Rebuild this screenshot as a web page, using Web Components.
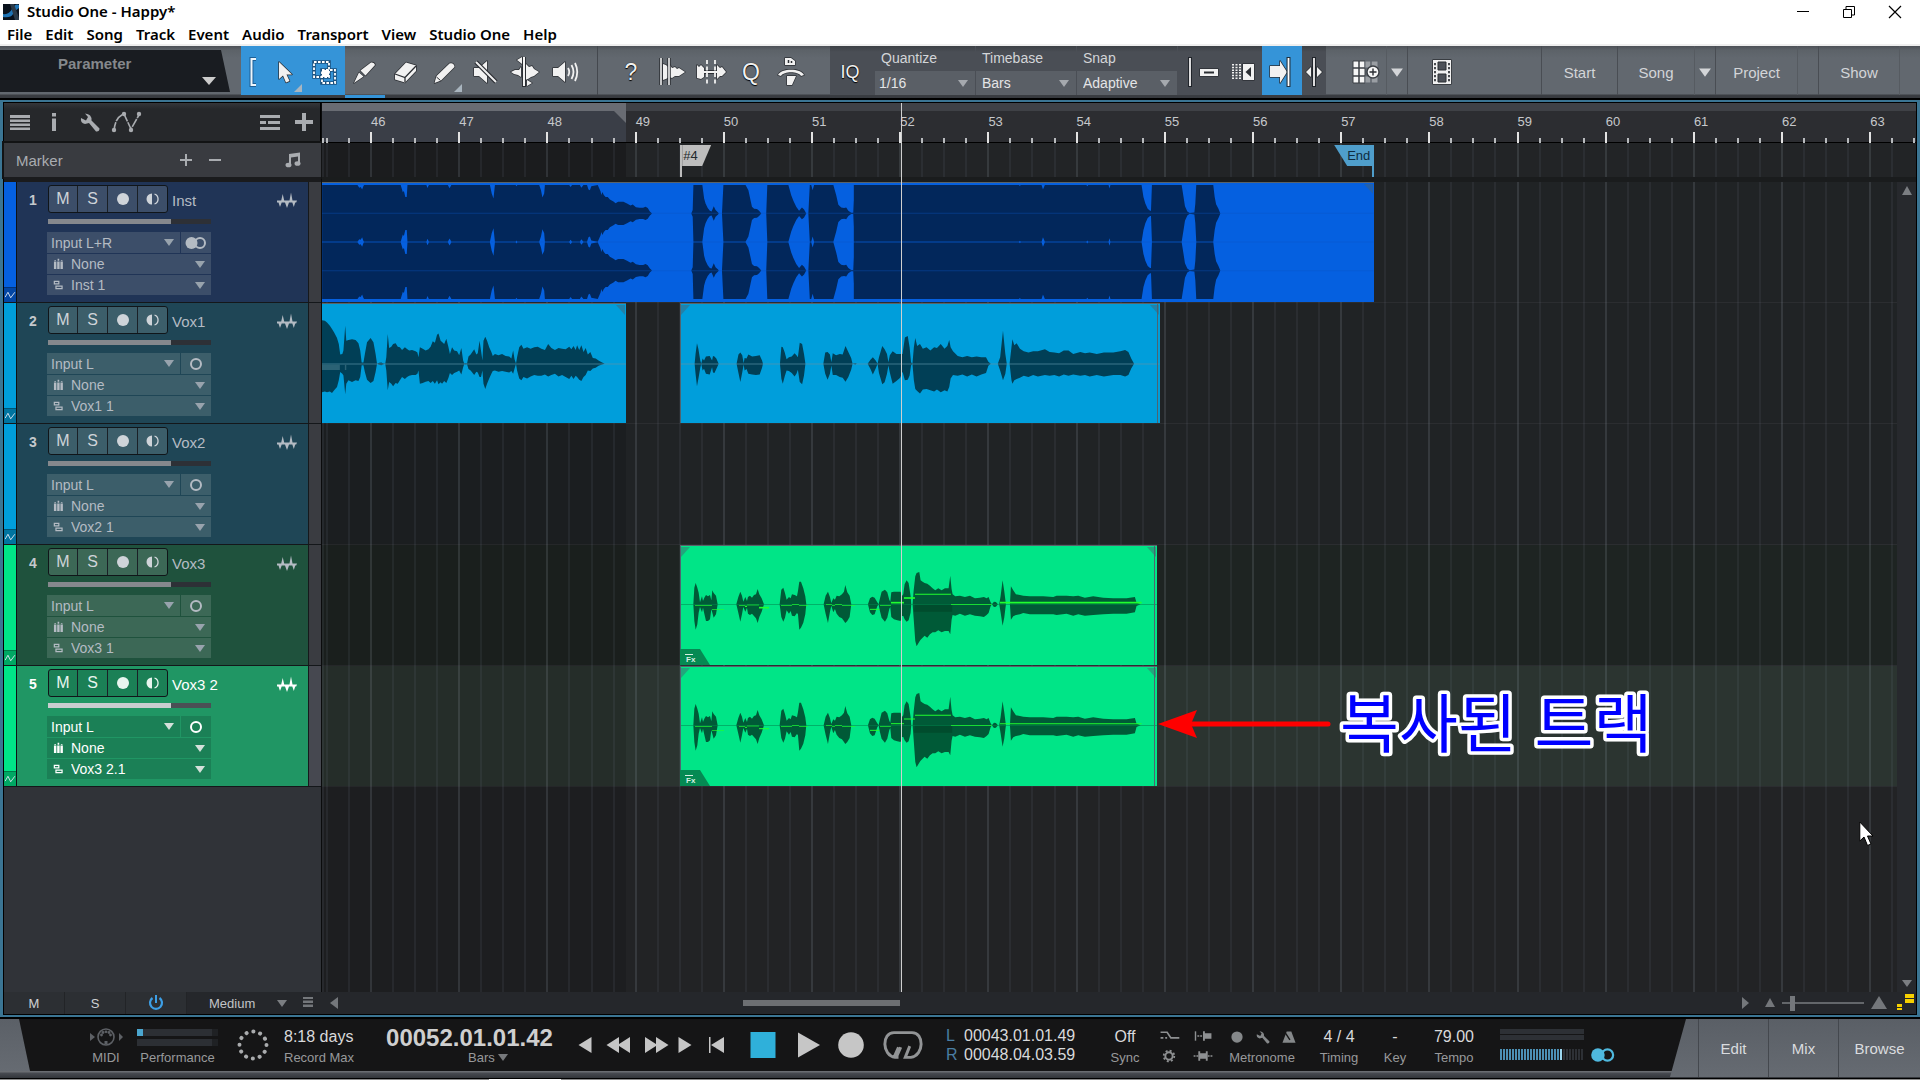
<!DOCTYPE html>
<html lang="ko">
<head>
<meta charset="utf-8">
<title>Studio One - Happy*</title>
<style>
html,body{margin:0;height:100%;background:#000}
body{font-family:"Liberation Sans","Noto Sans CJK KR",sans-serif;font-size:14px;color:#d3d5d8;overflow:hidden}
</style>
</head>
<body>
<studio-app></studio-app>
<script>
const BASE = `<style>
:host{display:block;box-sizing:border-box}
*,*::before,*::after{box-sizing:border-box}
button,select,input{font:inherit;color:inherit;margin:0;padding:0;border:0;background:none;border-radius:0;outline:0}
select{appearance:none;cursor:pointer}
option{color:#000}
svg{display:block;flex:none}
</style>`;
const make = (name, render) => customElements.define(name, class extends HTMLElement {
  connectedCallback() {
    if (this.shadowRoot) return;
    const root = this.attachShadow({mode: 'open'});
    const t = document.createElement('template');
    t.innerHTML = BASE + render(this);
    root.append(t.content.cloneNode(true));
  }
});

/* ---------- icons ---------- */
const O = 'fill="#f1f1f1" stroke="#2b2e33" stroke-width="1.4" paint-order="stroke" stroke-linejoin="round"';
const ICONS = {
  bracket: `<path d="M19 3H14.500V29H19" fill="none" stroke="#1d5f95" stroke-width="4"/><path d="M19 3H14.500V29H19" fill="none" stroke="#eef6fc" stroke-width="2"/>`,
  arrow: `<path ${O} d="M10 6V23L14 19.500 17 26.500 20.500 25 17.500 18.500H23Z"/>`,
  marquee: `<g fill="none" stroke="#1b4f7c" stroke-width="3.500"><path d="M5 6H20V21H5ZM13 14H26V27H13Z"/></g><g fill="none" stroke="#fff" stroke-width="1.800" stroke-dasharray="2.600 1.400"><path d="M5 6H20V21H5Z"/><path d="M13 14H26V27H13Z"/></g><path d="M13 14H20V21H13Z" fill="#fff"/>`,
  knife: `<path ${O} d="M5 27 10 16.500 14.500 20.500ZM11.500 14.500 22 6.500Q25.500 6 26 9L16.500 19.500Z"/>`,
  eraser: `<path ${O} d="M6 18 17 6.500 27 9.500V15L16 26.500 6 23.500Z"/><path d="M6 18 16 21.500 27 10M16 21.500V26" fill="none" stroke="#2b2e33" stroke-width="1.300"/>`,
  pencil: `<path ${O} d="M5.500 27 7.500 20 20.500 7.500Q25 6.500 25.500 11L12 24.500Z"/><path d="M7.500 21 11.500 24.500" stroke="#2b2e33"/>`,
  mute: `<path ${O} d="M5 12H10L18 5V27L10 20H5Z"/><path d="M7 6 27 26" stroke="#2b2e33" stroke-width="4.500"/><path d="M7 6 27 26" stroke="#f1f1f1" stroke-width="2"/>`,
  bend: `<path ${O} d="M2 16 6 14 10 14 12 11V21L9 19 5 18ZM17 8 20 11 23 10 25 13 30 16 25 20 22 21 19 23 17 24Z"/><path d="M15 1V31" stroke="#2b2e33" stroke-width="4"/><path d="M15 1V30" stroke="#f1f1f1" stroke-width="2"/><path ${O} d="M8 4 13 1V8ZM18 24V30L23 27Z"/>`,
  listen: `<path ${O} d="M4 12H9L16 6V26L9 20H4Z"/><path d="M19 12Q21.500 16 19 20M22.500 9Q26.500 16 22.500 23M26 7Q30.500 16 26 25" fill="none" stroke="#f1f1f1" stroke-width="1.800"/>`,
  strip: `<path ${O} d="M8 8 11 9 13 11 15 9 17 12 20 11 22 13 24 12 30 16 24 20 20 20 17 22 14 21 11 23 8 24Z"/><path d="M6 2V29M14 2V29" stroke="#2b2e33" stroke-width="3.500"/><path d="M6 2V29M14 2V29" stroke="#f1f1f1" stroke-width="1.600"/>`,
  split: `<path ${O} d="M2 9 4 11 6 9 9 12V21L6 23 2 22ZM22 9 25 12 27 11 31 16 27 20 25 20 22 23Z"/><path d="M9 16H22" stroke="#2b2e33" stroke-width="4"/><path d="M9 16H22" stroke="#f1f1f1" stroke-width="2"/><path d="M12 4V28M20 4V28" stroke="#f1f1f1" stroke-width="1.800" stroke-dasharray="4 2.500"/>`,
  macro: `<path ${O} d="M10 9V2H16L20 5V9ZM3 19C6 12 26 12 29 19L26 20C23 15 9 15 6 20ZM12 20H21L17 29H12Z"/><path d="M13.500 7V4M16.500 7V5" stroke="#2b2e33" stroke-width="1.500"/>`,
  ahead: `<path ${O} d="M4 10H14V5L21 16 14 27V21H4Z"/><path d="M22.500 1V31" stroke="#20303e" stroke-width="4"/><path d="M22.500 2V30" stroke="#fff" stroke-width="1.800"/>`,
  clip: `<path d="M7 13H25V20H7Z" ${O}/><path d="M11 15.500H21V17.500H11Z" fill="#2b2e33"/>`,
  keys: `<path d="M6 8V24M9.500 8V24M13 8V24" stroke="#f1f1f1" stroke-width="2" stroke-dasharray="1.500 1.200"/><path d="M16 8H27V24H16Z" ${O}/><path d="M24 11V21L18.500 16Z" fill="#2b2e33"/>`,
  halves: `<path d="M16 1V31" stroke="#20242a" stroke-width="4"/><path d="M16 2V30" stroke="#f1f1f1" stroke-width="1.800"/><path ${O} d="M13 11V21L8 16ZM19 11V21L24 16Z"/>`,
  vline: `<path d="M16 1V31" stroke="#20242a" stroke-width="4"/><path d="M16 2V30" stroke="#f1f1f1" stroke-width="1.800"/>`,
  grid: `<g fill="#f6f6f6" stroke="#3b3f45"><path d="M3 5H9V12H3ZM9 5H15V12H9ZM3 12H9V20H3ZM9 12H15V20H9ZM3 20H9V27H3ZM9 20H15V27H9Z"/></g><g fill="#9a9ea3" stroke="#5f656c"><path d="M15 5H21V12H15ZM21 5H28V12H21ZM15 20H21V27H15ZM21 20H28V27H21Z"/></g><circle cx="23" cy="16" r="6" fill="#f6f6f6" stroke="#3b3f45" stroke-width="1.400"/><path d="M23 12.500V19.500M19.500 16H26.500" stroke="#2b2e33" stroke-width="1.400"/>`,
  film: `<path d="M6 4H24V28H6Z" ${O}/><path d="M8 7V27M22 7V27" stroke="#2b2e33" stroke-width="1.700" stroke-dasharray="2.200 1.800"/><path d="M11 6H19V14H11ZM11 18H19V26H11Z" fill="#4d5158" stroke="#2b2e33"/>`,
  rows: `<path d="M6 9H26V12H6ZM6 13.500H26V16H6ZM6 17.500H26V20H6ZM6 21.500H26V24H6Z"/>`,
  info: `<path d="M14 7H18V10.500H14ZM14 12.500H18V25H14Z"/>`,
  wrench: `<path d="M7 12Q6 17 11 18L15 17 22 25.500Q25.500 26 25.500 22.500L17.500 14.500Q18 8 11 7.500L14 11 12 14.500Z"/>`,
  curve: `<path d="M3 25Q4 11 13 8L20 23 28 9" fill="none" stroke="currentColor" stroke-width="1.600" stroke-dasharray="9 1"/><g><circle cx="3" cy="24" r="2.200"/><circle cx="13" cy="8" r="2.200"/><circle cx="20" cy="24" r="2.200"/><circle cx="28" cy="8" r="2.200"/></g>`,
  lanes: `<path d="M6 9H26V12H6ZM6 15H12V18H6ZM14 15H26V18H14ZM6 21H26V24H6Z"/>`,
  plus: `<path d="M14 7H18V14H25V18H18V25H14V18H7V14H14Z"/>`,
  add: `<path d="M15 10H17V15H22V17H17V22H15V17H10V15H15Z"/>`,
  sub: `<path d="M10 15H22V17H10Z"/>`,
  note: `<path d="M12 10 23 8.500V19H21V12.500L14 13.500V21H12Z"/><ellipse cx="11.500" cy="21" rx="3" ry="2.300"/><ellipse cx="20.500" cy="19.500" rx="3" ry="2.300"/>`,
  wave: `<path d="M6 15.500H10.200L11.700 9 13.200 15.500H18.500L20 7.500 21.500 15.500H26L25.200 17.500H24.200L22.800 22 21.300 17.500H18L16 23 14 17.500H10.700L9 22 7.500 17.500H6Z"/>`,
  rec: `<circle cx="16" cy="16" r="6"/>`,
  mon: `<path d="M15 10.500V21.500A5.500 5.500 0 0 1 15 10.500Z"/><path d="M17.500 11A5.300 5.300 0 0 1 17.500 21" fill="none" stroke="currentColor" stroke-width="1.300"/>`,
  mini: `<path d="M9 19 13 12 17 20 23 12" fill="none" stroke="currentColor" stroke-width="1.300"/>`,
  bank: `<path d="M11 13H14V22H11ZM15 13H18V22H15ZM19 13H22V22H19Z"/><path d="M11.500 11H13.500V12H11.500ZM15.500 9.500H17.500V12H15.500ZM19.500 11H21.500V12H19.500Z"/>`,
  route: `<path d="M11.500 11.500H17V14.500H11.500ZM13.500 17.500H21V20.500H13.500Z" fill="none" stroke="currentColor" stroke-width="1.500"/>`,
  mono: `<circle cx="16" cy="16" r="5" fill="none" stroke="currentColor" stroke-width="2"/>`,
  stereo: `<circle cx="11.500" cy="16" r="6"/><circle cx="20" cy="16" r="5" fill="none" stroke="currentColor" stroke-width="2"/>`,
  power: `<path d="M12.500 11A6 6 0 1 0 19.500 11" fill="none" stroke="currentColor" stroke-width="2.200"/><path d="M15 8H17V16H15Z"/>`,
  down: `<path d="M11 13H21L16 20Z"/>`,
  up: `<path d="M11 20H21L16 11Z"/>`,
  upbig: `<path d="M8 22H24L16 9Z"/>`,
  left: `<path d="M20 10V22L12 16Z"/>`,
  right: `<path d="M13 10V22L20 16Z"/>`,
  list: `<path d="M11 10H21V12H11ZM11 13.500H21V16H11ZM11 17.500H21V20H11Z"/>`,
  midi: `<circle cx="16" cy="16" r="8" fill="none" stroke="currentColor" stroke-width="1.600"/><g><circle cx="11.500" cy="14" r="1.400"/><circle cx="13" cy="11.500" r="1.400"/><circle cx="16" cy="10.800" r="1.400"/><circle cx="19" cy="11.500" r="1.400"/><circle cx="20.500" cy="14" r="1.400"/><path d="M14.500 20H17.500V23H14.500ZM0 12 5 16 0 20ZM29 12 33 16 29 20Z"/></g>`,
  prev: `<path d="M22.500 8V24L9.500 16Z"/>`,
  rew: `<path d="M17 8V24L4.500 16ZM28 8V24L15.500 16Z"/>`,
  ffw: `<path d="M15 8V24L27.500 16ZM4 8V24L16.500 16Z"/>`,
  next: `<path d="M9.500 8V24L22.500 16Z"/>`,
  start: `<path d="M8 8H9.500V24H8ZM23 8V24L10 16Z"/>`,
  stop: `<path d="M3.500 3H28.500V29H3.500Z"/>`,
  play: `<path d="M5 3.500V28.500L27 16Z"/>`,
  record: `<circle cx="16" cy="16" r="12.800"/>`,
  loop: `<path d="M8 27 12 18M12 27H9C-3 25-3 5 8 5H24C35 5 35 25 23 27H18L22 17M14 18 10 27" fill="none" stroke="currentColor" stroke-width="2.600"/>`,
  gear: `<circle cx="16" cy="16" r="4.500" fill="none" stroke="currentColor" stroke-width="2.400"/><circle cx="16" cy="16" r="6.500" fill="none" stroke="currentColor" stroke-width="2.200" stroke-dasharray="2.500 2.600"/>`,
  ramp: `<path d="M7 12H14L18 18H27M7 18H10M12 18H14" fill="none" stroke="currentColor" stroke-width="1.800"/>`,
  punchin: `<path d="M8 11V21" stroke="currentColor" stroke-width="1.500"/><path d="M10 16H15" stroke="currentColor" stroke-width="1.500" stroke-dasharray="2 1"/><path d="M16 11H18V13H25V19H18V21H16Z"/>`,
  punchout: `<path d="M6 16H11M21 16H27" stroke="currentColor" stroke-width="1.500" stroke-dasharray="2 1"/><path d="M11 11H13V13H19V11H21V21H19V19H13V21H11Z"/>`,
  metro: `<path d="M13.500 10H18.500L23 22H9Z"/><path d="M17 19 11 10" stroke="#151516" stroke-width="1.500"/>`,
  winmin: `<path d="M10 15.500H22" stroke="#000" stroke-width="1"/>`,
  winmax: `<path d="M10.500 13.500H18.500V21.500H10.500ZM13 13V10.500H21.500V19H19" fill="none" stroke="#000"/>`,
  wincls: `<path d="M10 10 22 22M22 10 10 22" stroke="#000" stroke-width="1.200"/>`,
  app: `<path d="M8 8H24V24H8Z" fill="#0a121c"/><path d="M8 18Q14 19 17 13T24 9V12Q20 14 18 18T8 21Z" fill="#1f74b5"/><path d="M15 8H19L24 22V24H20Z" fill="#2b3a48"/>`,
};
make('ui-icon', el => {
  const s = +(el.getAttribute('size') || 32);
  return `<style>:host{display:block;flex:none;width:${s}px;height:${s}px}svg{overflow:visible}</style>
  <svg width="${s}" height="${s}" viewBox="0 0 32 32" fill="currentColor" aria-hidden="true">${ICONS[el.getAttribute('name')]}</svg>`;
});
const ic = (n, s) => `<ui-icon name="${n}"${s ? ` size="${s}"` : ''}></ui-icon>`;

/* drop-down with its own caret */
make('drop-down', el => `<style>
:host{display:flex;position:relative;align-items:center;min-width:0}
select{flex:1;min-width:0;height:100%;padding-left:var(--pad,6px)}
i{width:0;height:0;border:5px solid transparent;border-top:7px solid var(--caret,#a5a9ae);border-bottom:0;margin-right:var(--cm,6px);margin-left:var(--cl,4px);pointer-events:none}
::slotted(*){pointer-events:none;margin:0 -2px}
</style><slot></slot><select aria-label="${el.getAttribute('label')}"><option>${el.getAttribute('value')}</option></select><i></i>`);

/* ---------- window title and menus ---------- */
make('title-bar', () => `<style>
:host{display:flex;align-items:center;height:23px;background:#fff;color:#000;font:600 15px/20px "Noto Sans",sans-serif;padding:0 2px 0 3px}
span{flex:1;margin-left:8px;padding-bottom:1px}.w{display:flex}.w button{width:46px;height:23px;display:grid;place-content:center}
.app{width:16px;height:23px;display:grid;place-content:center}
</style><div class="app">${ic('app')}</div><span>Studio One - Happy*</span>
<div class="w"><button aria-label="Minimize">${ic('winmin')}</button><button aria-label="Restore">${ic('winmax')}</button><button aria-label="Close">${ic('wincls')}</button></div>`);
make('menu-bar', () => `<style>
:host{display:flex;height:23px;background:#fff;color:#000;font:600 15px/22px "Noto Sans",sans-serif;border-bottom:2px solid #efefef;padding-left:7px;gap:13px}
button{height:21px;line-height:22px}
</style>${['File','Edit','Song','Track','Event','Audio','Transport','View','Studio One','Help'].map(x => `<button>${x}</button>`).join('')}`);

/* ---------- main toolbar ---------- */
make('tool-bar', () => `<style>
:host{display:flex;height:54px;border-bottom:2px solid #000;background:linear-gradient(#4d5157 0,#5c6268 4px,#62686f 12px,#62686f 48px,#3a3d42 49px,#36393e);padding-bottom:3px}
button{height:49px;display:grid;place-content:center;flex:none;width:40px;position:relative;padding-top:3px}
.param{width:241px;flex:none;padding-top:4px}
.param div{width:230px;height:42px;background:#191c21;clip-path:polygon(0 0,221px 0,100% 100%,0 100%);display:flex;justify-content:space-between;padding:5px 14px 0 58px;color:#85888c;font:bold 15px/18px "Liberation Sans",sans-serif}
.param i{border:7px solid transparent;border-top:8px solid #ccc;border-bottom:0;margin-top:22px;height:0}
.on{background:#3594d8}.b{width:24px}
.under{box-shadow:0 3px #3594d8}
.more::after{content:"";position:absolute;right:3px;bottom:3px;border-left:8px solid transparent;border-bottom:8px solid #a9b5bf}
.grp{display:flex;flex:none}
.g1{border-right:1px solid #44484e;padding-right:12px}
.g2{padding:0 19px 0 13px;color:#f1f1f1;font-size:23px}
.g2 b,.iq{font-weight:400;text-shadow:0 0 1px #000,0 1px 1px #000}
.dark{background:linear-gradient(#3c4045,#4a4e55 6px)}
.iq{width:40px;margin-right:5px;font-size:18px;color:#f1f1f1}
.fld{width:101px;display:flex;flex-direction:column;border-right:1px solid #4a4e55}
.fld label{height:25px;line-height:22px;padding-left:6px;padding-top:1px}
.fld drop-down{flex:1;background:#5a5f66;color:#e4e5e7;--pad:6px;--cm:7px}
.v{width:24px}.k{width:14px;margin-right:7px}.c{width:39px}.n{width:24px}
.sp{flex:1}
.go{font-size:15px;border-left:1px solid #494d53;color:#d3d5d8}
.car{width:21px;border-left:1px solid #565b61;color:#d3d5d8}
</style>
<div class="param"><div><span>Parameter</span><i></i></div></div>
<div class="grp g1">
<button class="on b" aria-label="Tool link">${ic('bracket')}</button><button class="on more" aria-label="Arrow">${ic('arrow')}</button><button class="on" aria-label="Range">${ic('marquee')}</button>
<button class="under" aria-label="Split">${ic('knife')}</button><button aria-label="Eraser">${ic('eraser')}</button><button class="more" aria-label="Paint">${ic('pencil')}</button><button aria-label="Mute">${ic('mute')}</button><button aria-label="Bend">${ic('bend')}</button><button aria-label="Listen">${ic('listen')}</button></div>
<div class="grp g2"><button aria-label="Help"><b>?</b></button><button aria-label="Strip silence">${ic('strip')}</button><button aria-label="Audio bend">${ic('split')}</button><button aria-label="Quantize panel"><b>Q</b></button><button aria-label="Macros">${ic('macro')}</button></div>
<div class="grp dark"><button class="iq">IQ</button>
<div class="fld"><label>Quantize</label><drop-down label="Quantize" value="1/16" style="--pad:4px"></drop-down></div>
<div class="fld"><label>Timebase</label><drop-down label="Timebase" value="Bars"></drop-down></div>
<div class="fld"><label>Snap</label><drop-down label="Snap" value="Adaptive"></drop-down></div>
<button class="v" aria-label="Snap line">${ic('vline')}</button><button class="k" aria-label="Events">${ic('clip')}</button><button class="c" aria-label="Keys">${ic('keys')}</button>
<button class="on" aria-label="Autoscroll">${ic('ahead')}</button><button class="n" aria-label="Cursor">${ic('halves')}</button></div>
<div class="grp"><button style="width:60px;padding-left:20px" aria-label="Grid">${ic('grid')}</button><button class="car" aria-label="Grid options">${ic('down',38)}</button><button class="go" style="width:70px" aria-label="Video">${ic('film')}</button></div>
<div class="sp"></div>
<div class="grp"><button class="go" style="width:76px">Start</button><button class="go" style="width:77px">Song</button><button class="car" aria-label="Song list">${ic('down',38)}</button><button class="go" style="width:82px">Project</button><div class="car"></div><button class="go" style="width:81px">Show</button><div class="car"></div></div>`);

/* ---------- track header ---------- */
make('track-head', el => {
  const a = n => el.getAttribute(n);
  const st = a('input') === 'Input L+R';
  return `<style>
:host{display:grid;grid-template-columns:12px 1fr 12px;height:var(--track-h);border-bottom:1px solid #14171a;color:#b4bbc3;--caret:#98a3ad}
:host([selected]){color:#fff;--caret:#d4e0da}
.col{background:var(--c);display:flex;align-items:flex-end}
.col span{height:15px;width:12px;overflow:hidden;background:#0004;color:#dfe8f5;border-top:1px solid #0004;display:grid;place-content:center;flex:none}
.body{background:var(--b);border-left:1px solid #0d1216;display:grid;grid-template-columns:30px 164px 1fr;align-content:start;border-right:1px solid #16191c}
.num{font:bold 14px/16px "Liberation Sans",sans-serif;padding:10px 0 0 12px;color:#c4c8cc}
:host([selected]) .num{color:#fff}
.btns{display:grid;grid-template-columns:28px 30px 30px 30px;margin:3px 0 0 1px;height:28px;width:120px;border:1px solid #101519;border-radius:3px;background:var(--k)}
.btns button{display:grid;place-content:center;font-size:16px;color:#cfd4d9;border-left:1px solid #1a2026;height:26px}
.btns button:first-child{border:0}
:host([selected]) .btns button{color:#e8f5ef}
.top{grid-column:3;grid-row:1;display:flex;justify-content:space-between;align-items:center;padding:6px 5px 0 0;margin-left:-39px;height:31px}
.name{font-size:15px;line-height:18px}
.vol{height:5px;width:163px;margin:6px 0 8px 1px;grid-column:2;appearance:none;background:linear-gradient(90deg,#85888d 123px,#2d3036 0)}
:host([selected]) .vol{background:linear-gradient(90deg,#c9cdd0 123px,#4b4f55 0)}
.vol::-webkit-slider-thumb{appearance:none;width:0;height:0}
.io{grid-column:2;display:grid;grid-template-columns:133px 30px;gap:1px;font-size:14px}
.io>*{height:20px;background:var(--k)}
.io .in,.io button{height:21px}
.io .w{grid-column:span 2;--pad:2px}
.io .in{--pad:4px}
.io button{display:grid;place-content:center}
.strip{background:#3a3c41}
:host([selected]) .strip{background:#464850}
</style>
<div class="col"><span>${ic('mini',22)}</span></div>
<div class="body"><div class="num">${a('num')}</div>
<div class="btns"><button>M</button><button>S</button><button aria-label="Record">${ic('rec')}</button><button aria-label="Monitor">${ic('mon')}</button></div>
<div class="top"><span class="name">${a('name')}</span>${ic('wave')}</div>
<input class="vol" type="range" aria-label="Volume" value="75">
<div class="io"><drop-down class="in" label="Input" value="${a('input')}"></drop-down><button aria-label="Channel format">${ic(st ? 'stereo' : 'mono')}</button>
<drop-down class="w" label="Instrument" value="None">${ic('bank',26)}</drop-down>
<drop-down class="w" label="Output" value="${a('out')}">${ic('route',26)}</drop-down></div></div>
<div class="strip"></div>`;
});

/* ---------- time grid: one cell per beat ---------- */
const cells = beats => {
  let out = '<i style="flex:0.18"></i>', left = beats - 0.18, n = 2;
  while (left > 0) {
    const bar = n % 4 === 0;
    out += `<i class="${bar ? 'bar' : 'beat'}" style="flex:${Math.min(1, left).toFixed(2)}">${bar ? `<span>${45 + n / 4}</span>` : ''}</i>`;
    left -= 1; n++;
  }
  return out;
};
make('time-ruler', () => `<style>
:host{display:flex;height:40px;background:linear-gradient(#3f4146 8px,#2c2d31 8px);border-bottom:1px solid #000;position:relative}
i{font-style:normal;position:relative;height:39px;min-width:0;white-space:nowrap}
i::before{content:"";position:absolute;left:0;bottom:-1px;width:2px;height:5px;background:#b9bbbe}
i:first-child::before{display:none}
.bar::before{height:11px;background:#e2e2e2}
span{font-size:13px;line-height:16px;display:block;padding:11px 0 0 1px;color:#c6c8cb}
.loop{position:absolute;left:0;top:0;bottom:0;width:19.07%;background:linear-gradient(#696c73 8px,#3a3e47 8px)}
.loop::after{content:"";position:absolute;right:0;top:8px;border-top:12px solid #696c73;border-left:12px solid transparent}
</style><div class="loop"></div>${cells(72.28)}`);
make('time-grid', () => `<style>
:host{display:flex;position:absolute;inset:0;pointer-events:none;z-index:1}
:host([wide]){right:19px}
i{min-width:0;box-shadow:inset 2px 0 #8e99a518;height:100%}
i:first-child{box-shadow:none}.bar{box-shadow:inset 2px 0 #8e99a530}span{display:none}
</style>${cells(71.44)}`);

/* ---------- clips ---------- */
/* "x:up,down" samples round a centre line, as one closed outline */
const outline = (data, c) => {
  const p = data.trim().split(/\s+/).map(s => { const [x, v] = s.split(':'); const [u, d] = v.split(','); return [+x, +u, +(d ?? u)]; });
  return 'M' + p.map(q => `${q[0]} ${c - q[1]}`).join('L') + 'L' + p.reverse().map(q => `${q[0]} ${c + q[2]}`).join('L') + 'Z';
};
const instA = `6:86 105:86 110:78 114:80 118:72 122:84 124:86 226:86 232:64 235:68 239:50 243:50 245:86 298:86 301:77 305:86 358:86 363:76 368:86 476:86 481:60 486:45 490:86 548:86 550:82 553:86 614:86 619:70 623:48 628:60 630:86 698:86 702:80 706:86 728:86 732:78 738:86 748:86 752:72 756:70 760:82 778:86 782:76 786:66 788:56 791:65 795:56 800:50 806:50 812:42 822:36 828:31 835:35 850:35 860:30 870:24 876:27 885:19 895:17 905:17 912:20 918:16 924:6 930:0 1040:0 1044:10 1046:86 1071:86 1076:45 1080:30 1086:16 1092:8 1097:6 1103:22 1108:10 1115:3 1117:0 1126:0 1130:86 1192:86 1200:70 1206:40 1210:20 1216:14 1224:13 1230:8 1236:0 1250:0 1253:86 1312:86 1320:55 1326:38 1334:20 1342:8 1350:18 1356:12 1362:0 1368:0 1372:86 1376:86 1380:70 1384:86 1438:86 1446:55 1452:26 1460:18 1468:16 1474:18 1480:8 1488:2 1494:2 1498:86 1500:86`;
const instB = `390:86 740:86 742:83 744:86 788:86 791:72 795:86 883:86 885:82 887:86 930:86 932:75 934:86 1000:86 1004:50 1008:30 1013:14 1018:8 1020:8 1022:86 1085:86 1089:50 1092:22 1097:6 1102:1 1112:3 1114:30 1116:86 1152:86 1155:50 1158:28 1163:14 1167:0`;
const voxA = `6:132,86 14:130,84 20:125,86 28:115,84 34:105,88 40:95,80 48:78,70 53:60,50 57:28,25 63:30,30 66:40,35 71:115,92 74:70,60 80:72,50 90:74,55 100:72,50 108:62,52 113:40,40 117:4 122:4 126:30,25 132:65,48 142:78,58 150:65,52 156:30,25 160:0 166:3 172:4 178:1 183:0 186:20 190:90,80 194:48,55 200:52,60 205:60,68 212:62,58 218:52,60 224:50 230:42,40 238:50,46 244:45,40 250:40,36 258:42,34 268:38,34 273:34,30 276:20 280:50,60 288:46,58 296:40,54 304:44,52 310:52,58 316:68,52 322:64,60 328:88,50 332:92,62 338:70,56 342:66,60 348:60,52 354:76,58 360:50,42 364:30,28 370:50,34 376:40,28 384:38,24 390:26,20 396:48,32 401:10 404:1 408:2 412:1 416:22,16 422:28,20 432:44,34 438:28,24 442:32,26 447:70,40 451:40 455:10,20 458:70,60 463:82,76 468:70,60 474:50,44 480:36,30 484:24,22 490:30,20 500:26,24 510:30,22 520:24 530:22,26 536:16,22 541:40,30 545:14 549:0 552:20 558:50,44 564:58,50 570:46,40 580:50,44 590:46,38 600:50,34 610:52,36 620:46,36 630:42,32 639:60,38 648:48,34 658:42,30 668:48,38 678:46,34 688:44,40 698:52,46 704:44,36 710:54,46 716:42,36 720:56,40 726:42,48 732:56,52 738:36,40 744:48,34 750:28,20 757:36,22 764:18,14 772:16,12 780:10,6 790:4,2 797:0`;
const voxB = `52:0 54:30 57:62,68 60:45 64:10,12 66:0 69:16,20 72:10,15 76:22,30 84:24,32 89:10 91:24,26 94:22,28 98:16 103:0 141:0 145:28 149:34,55 153:26 156:2 158:18,20 162:16 166:28,30 174:22,32 182:24,34 190:26,32 195:10,12 197:0 233:0 236:52,45 239:50,60 243:35,38 247:14,20 252:20,22 258:22,28 264:32,38 268:26,30 271:20,18 275:64,55 280:60,62 284:30,35 287:0 325:0 329:34,30 334:36,48 339:28,30 342:5 345:32,34 352:26,34 360:30,40 366:28,42 372:54 378:36,40 384:18 387:0 393:2 396:0 419:0 425:12,16 430:20,32 436:10,14 440:0 443:20,28 450:54,62 455:44,56 460:30 463:5 466:26 472:38,60 480:30,52 488:30,42 493:30,24 498:80,50 504:84,48 508:50,35 511:5 514:0 517:50 520:78,76 524:54,82 530:60,90 536:46,78 544:50,76 552:40,80 560:50,84 566:48,78 574:60,86 582:46,80 588:54,84 592:72,70 595:50,44 600:38,34 610:24,36 620:20,32 630:24,38 640:20,32 650:22,38 660:20,32 670:20,28 675:6 680:0 695:0 700:20 706:100,50 711:30 714:0 720:0 724:50 726:74,60 730:56,50 735:62,46 742:46,42 750:38,36 760:34,40 770:38,34 780:38 795:44,34 805:36 815:34 825:32,38 835:40,32 845:40,36 855:30,32 870:36 880:32,34 890:34,38 905:30,34 920:34,38 940:34 955:38,34 965:42,38 972:36,34 978:16,14 984:0`;
const voxC = `70:0 73:50 77:64,76 82:50,60 86:35,25 90:6,8 96:24 99:10 103:20,28 108:28,50 114:24,50 120:28,45 124:12,15 127:42,25 131:34,40 138:26,30 143:0 199:0 205:22,25 211:38,52 216:26,30 220:8 226:22 231:10 234:22,28 240:26,32 246:20,28 252:28,35 258:30,42 263:46,56 268:30,38 275:18,22 282:0 329:0 334:44,38 340:50,52 345:34,40 350:14,18 357:22,28 362:18,20 366:30,34 374:28,36 381:24,26 384:40,30 388:68,76 393:68,70 400:48,55 406:24,30 409:0 461:0 467:26,28 474:38,56 480:22 484:4 490:18,24 495:14 500:26,28 508:24,38 516:30,42 522:38,50 526:58,56 532:36,50 539:26,38 544:0 594:0 600:18,24 607:23,32 614:20,30 622:6 626:0 629:14,16 635:38,40 645:44,52 652:36,40 658:14 661:8 664:36,38 672:38,45 682:38,48 692:38,50 696:25,35 700:30,35 704:60,45 710:72,52 716:64,48 722:25 724:0 728:0 731:40 736:84,110 740:94,126 748:97,112 752:72,106 758:68,100 764:64,94 772:62,100 780:56,90 788:48,84 796:42,84 805:48,78 815:42,84 825:48,80 836:48,80 841:86,90 845:46 848:30,32 856:24,34 870:26,28 885:22,34 900:26,30 915:18,34 930:20,36 942:22,38 950:18,32 956:22,26 962:6 966:0 972:8 978:7 984:0 988:0 992:24 998:72,64 1003:40 1008:0 1020:0 1023:54,46 1030:42,36 1038:30,32 1050:28,30 1060:26 1080:24,30 1120:24,30 1150:22,30 1160:26,32 1190:26,28 1210:24,34 1225:26,30 1245:20,34 1270:24,32 1300:20,30 1330:18,28 1370:18,28 1395:22,24 1400:5 1412:0`;
/* detected pitches: x1, x2, y, thickness */
const pitches = thin => [[75,126,196,2],[126,162,208,2],[207,225,196,2],[225,231,199,4],[231,267,195,2],[267,297,203,5],[333,366,196,2],[366,387,193,2],[387,414,196,2],[468,486,193,2],[486,495,196,2],[495,516,193,2],[516,556,196,2],[600,628,208,3],[630,663,196,2],[663,702,188,5],[702,735,174,5],[735,843,163,3],[843,966,193,2],[990,1415,188,5]]
  .map(([a, b, y, h]) => { const k = thin ? Math.min(h, 3) : h; return `<path d="M${a} ${y - k / 2}H${b}V${y + k / 2}H${a}Z"/>`; }).join('');
const green = thin => ({c: '#00e587', box: '30 18 1431 357', d: `<path fill="#005a37" d="${outline(voxC, 193)}"/><path fill="#004c2d" d="M735 193H847V215H732Z"/><path d="M30 192H1461V195H30Z" fill="#00864f88"/><g fill="#1fff2f">${pitches(thin)}</g>`});
const WAVES = {
  inst: {c: '#0560e0', box: '322 182 1052 120', d: [113, 286].map(c => `<g fill="#02275b"><path transform="translate(320 175) scale(.35714 .33333)" d="${outline(instA, c)}"/><path transform="translate(670 175) scale(.4719 .33333)" d="${outline(instB, c)}"/></g>`).join('') + `<path d="M322 212H1374V213H322ZM322 241H1374V242H322ZM322 270H1374V271H322Z" fill="#0b55c266"/>`},
  voxa: {c: '#009edb', box: '6 384 851 360', d: `<path fill="#013f56" d="${outline(voxA, 565)}"/><path d="M6 564H857V567H6Z" fill="#5f93a8aa"/><path d="M6 567H56V584H6ZM70 567H74V584H70Z" fill="#2b6275"/>`},
  voxb: {c: '#009edb', box: '21 384 1017 360', d: `<path fill="#013f56" d="${outline(voxB, 565)}"/><path d="M21 564H1038V567H21Z" fill="#5f93a8aa"/>`},
  voxc: green(false), voxd: green(true),
};
make('audio-clip', el => {
  const w = WAVES[el.getAttribute('wave')], fx = el.hasAttribute('fx'), s = +el.getAttribute('start'), e = +el.getAttribute('end');
  const fade = el.getAttribute('fade') || '';
  return `<style>
:host{position:absolute;z-index:2;top:0;bottom:0;left:${((s - 45.452) / 17.861 * 100).toFixed(3)}%;width:${((e - s) / 17.861 * 100).toFixed(3)}%;background:${w.c};border-top:1px solid #58636b}
.wv{position:absolute;inset:0;width:100%;height:100%}
.l,.r{position:absolute;top:1px;border-top:10px solid #46607077;z-index:1}
.l{left:1px;border-right:9px solid transparent}.r{right:1px;border-left:9px solid transparent}
.e{position:absolute;top:0;bottom:0;width:1px;background:#4f6470}
.fx{position:absolute;left:0;bottom:0;width:30px;height:16px;background:#058a53;clip-path:polygon(0 0,20px 0,100% 100%,0 100%);color:#d5efe2;font:bold 8px/8px "Liberation Sans",sans-serif;padding:7px 0 0 6px}
.fx::before{content:"";position:absolute;left:5px;top:5px;width:8px;height:1px;background:#d5efe2}
</style><svg class="wv" viewBox="${w.box}" preserveAspectRatio="none">${w.d}</svg>
${fade.includes('l') ? '<div class="l"></div><div class="e" style="left:0"></div>' : ''}${fade.includes('r') ? '<div class="r"></div>' : ''}${fade.includes('e') ? '<div class="e" style="right:2px"></div>' : ''}
${fx ? '<div class="fx">Fx</div>' : ''}`;
});
make('track-lane', () => `<style>
:host{height:var(--track-h);flex:none;position:relative;background:#202325;border-bottom:1px solid #2b2d30}
:host([tint]){background:#1e2422}:host([selected]){background:#2b3430}
</style><slot></slot>`);

make('marker-lane', () => `<style>
:host{height:34px;background:#222426;position:relative}
.f{position:absolute;z-index:2;top:2px;height:32px;font-size:13px;line-height:22px;color:#22282c}
.f span{display:block;height:21px}
.a{left:22.47%;width:31px;border-left:2px solid #bdbdbd}.a span{background:#bdbdbd;clip-path:polygon(0 0,100% 0,20px 100%,0 100%);padding-left:1px}
.b{left:63.5%;width:40px;border-right:2px solid #4f9ecb;color:#0e2c40}.b span{background:#4f9ecb;clip-path:polygon(0 0,100% 0,100% 100%,13px 100%);padding-left:13px}
.lp{position:absolute;left:0;top:0;bottom:0;width:19.07%;background:#0003}
</style><div class="lp"></div><time-grid wide></time-grid><div class="f a"><span>#4</span></div><div class="f b"><span>End</span></div>`);

/* ---------- arrange view ---------- */
make('arrange-view', () => `<style>
:host{display:grid;grid-template-columns:318px 1fr;grid-template-rows:1fr 22px;flex:1;min-height:0;border:solid #3b7593;border-width:2px 3px;background:#000;padding:1px;--track-h:121px}
.left{display:flex;flex-direction:column;border-right:1px solid #0a0b0c;background:#303338;min-height:0}
.tools{height:38px;display:flex;align-items:center;background:linear-gradient(#34363a,#26282b 6px);color:#a9acb0;border-right:1px solid #000}
.tools button,.mk button{height:32px;display:grid;place-content:center}
.tools .s{flex:1}
.mk{height:34px;margin:2px 0 0;outline:2px solid #121314;background:#393b40;display:flex;align-items:center;color:#a9acb0;font-size:15px;padding-left:12px}
.mk span{flex:1}
.tr{margin-top:5px;display:flex;flex-direction:column;box-shadow:0 -5px #1a1b1d}
.right{display:flex;flex-direction:column;position:relative;min-width:0;min-height:0;background:#1a1b1d}
.gap{height:5px;background:#1a1c1d;flex:none}
.cv{display:flex;flex:1;min-height:0}
.lanes{flex:1;position:relative;background:#222325;display:flex;flex-direction:column;overflow:hidden}
.lp{position:absolute;left:0;top:0;bottom:0;width:19.3%;background:#0002;z-index:1}
.sb{width:19px;background:#27292d;color:#7b7e82;display:flex;flex-direction:column;justify-content:space-between;align-items:center}
.sb button{width:19px;height:18px;display:grid;place-content:center}
.ph{position:absolute;top:0;bottom:0;left:36.33%;width:1px;background:#cfcfcf;z-index:4}
.note{position:absolute;z-index:5;left:52.45%;top:561px;display:flex;align-items:center;height:120px}
.note text{font:400 64px "Noto Sans CJK KR",sans-serif;fill:#00f;stroke:#fff;stroke-width:7px;stroke-linejoin:round;paint-order:stroke}
.cur{position:absolute;z-index:6;top:718px;left:96.4%}
.foot{grid-column:1/-1;background:#25272b;display:flex;align-items:center;color:#d0d2d4;font-size:13px}
.foot .c{width:61px;height:22px;display:grid;place-content:center;background:#2c2f33;border-right:1px solid #222427;flex:none}
.foot .p{color:#3d9fe6}
.foot drop-down{width:92px;margin-left:16px;height:22px;color:#c2c4c7;--caret:#7b7e82;--cm:8px}
.foot .g{color:#74777b;width:26px;display:grid;place-content:center;flex:none}
.bar{flex:1;height:6px}.bar div{width:11.33%;height:6px;margin-left:28.6%;background:#6d6f72}
input{appearance:none;width:82px;height:16px;background:linear-gradient(transparent 7px,#63666a 7px,#63666a 9px,transparent 9px)}
input::-webkit-slider-thumb{appearance:none;width:5px;height:15px;background:#74777b}
</style>
<div class="left">
<div class="tools"><button style="width:32px" aria-label="Track list">${ic('rows')}</button><button style="width:36px" aria-label="Inspector">${ic('info')}</button><button style="width:36px" aria-label="Setup">${ic('wrench')}</button><button style="width:38px" aria-label="Automation">${ic('curve')}</button><div class="s"></div><button style="width:36px" aria-label="Global tracks">${ic('lanes')}</button><button style="width:32px" aria-label="Add track">${ic('plus')}</button></div>
<div class="mk"><span>Marker</span><button aria-label="Add marker" style="width:29px">${ic('add')}</button><button aria-label="Remove marker" style="width:29px">${ic('sub')}</button><button aria-label="Marker timebase" style="width:32px;margin:0 12px 0 48px">${ic('note')}</button></div>
<div class="tr">
<track-head style="--c:#0560e0;--b:#203456;--k:#3c4e69" num="1" name="Inst" input="Input L+R" out="Inst 1"></track-head>
<track-head style="--c:#009edb;--b:#1f4656;--k:#3c5e6a" num="2" name="Vox1" input="Input L" out="Vox1 1"></track-head>
<track-head style="--c:#009edb;--b:#1f4656;--k:#3c5e6a" num="3" name="Vox2" input="Input L" out="Vox2 1"></track-head>
<track-head style="--c:#00e587;--b:#1f523d;--k:#3c6856" num="4" name="Vox3" input="Input L" out="Vox3 1"></track-head>
<track-head selected style="--c:#00e587;--b:#209664;--k:#1b8056" num="5" name="Vox3 2" input="Input L" out="Vox3 2.1"></track-head>
</div></div>
<div class="right"><time-ruler></time-ruler><marker-lane></marker-lane><div class="gap"></div>
<div class="cv"><div class="lanes"><div class="lp"></div><time-grid></time-grid>
<track-lane><audio-clip wave="inst" start="45.452" end="57.377" fade="r"></audio-clip></track-lane>
<track-lane><audio-clip wave="voxa" start="45.452" end="48.9" fade="r"></audio-clip><audio-clip wave="voxb" start="49.512" end="54.95" fade="lre"></audio-clip></track-lane>
<track-lane></track-lane>
<track-lane tint><audio-clip wave="voxc" start="49.512" end="54.92" fade="lre" fx></audio-clip></track-lane>
<track-lane selected><audio-clip wave="voxd" start="49.512" end="54.92" fade="lre" fx></audio-clip></track-lane>
</div><div class="sb"><button aria-label="Scroll up">${ic('up')}</button><button aria-label="Scroll down">${ic('down')}</button></div></div>
<div class="ph"></div>
<div class="note"><svg width="174" height="30" viewBox="0 0 174 30"><path d="M30 15H170" stroke="#f00" stroke-width="5" stroke-linecap="round"/><path d="M0 15 39 1 33 15 39 29Z" fill="#f00"/></svg><svg width="340" height="120" viewBox="0 0 340 120"><text x="8" y="83">복사된 트랙</text></svg></div>
<svg class="cur" width="16" height="26" viewBox="0 0 16 26"><path d="M.8 1V20L5 16 8.500 24.500 12 23 8.500 15H14Z" fill="#fff" stroke="#000"/></svg>
</div>
<div class="foot"><button class="c">M</button><button class="c">S</button><button class="c p" aria-label="Power">${ic('power',32)}</button><drop-down label="Track height" value="Medium"></drop-down><button class="g" aria-label="List">${ic('list')}</button><button class="g" aria-label="Scroll left">${ic('left')}</button>
<div class="bar"><div></div></div><button class="g" aria-label="Scroll right">${ic('right')}</button><div class="g" style="width:24px">${ic('up')}</div><input type="range" aria-label="Zoom" value="10"><div class="g" style="width:30px">${ic('upbig')}</div><svg width="22" height="18" viewBox="0 0 22 18" fill="#f7d000"><path d="M11 0H20V4H11ZM11 5H20V9H11ZM3 10H8V13H3ZM3 14H8V16H3Z"/></svg></div>`);

/* ---------- transport ---------- */
make('transport-bar', () => `<style>
:host{display:block;border-top:2px solid #000;background:#151516}
.row{display:flex;height:52px;background:#151516}
.edge{width:30px;background:linear-gradient(#5b6067,#666b72);clip-path:polygon(0 0,19px 0,100% 100%,0 100%);flex:none}
.cell{display:flex;flex-direction:column;flex:none;align-items:center;font-size:13px;line-height:15px;color:#98999b;padding-top:7px}
.cell .t{height:21px;display:flex;align-items:center;justify-content:center;color:#d9dadc;font-size:16px;line-height:20px;margin-bottom:3px}
.meters{display:flex;flex-direction:column;gap:3px;width:81px;margin-bottom:4px}
.meters i{height:7px;background:linear-gradient(90deg,#2c2f34 92%,#1f2124 0)}.meters i:first-child{background:linear-gradient(90deg,#4ba6cf 6px,#2c2f34 0 92%,#1f2124 0)}
.tm{font:bold 24px/24px "Liberation Sans",sans-serif;color:#cfcfcf;height:24px}
.time drop-down{width:40px;height:15px;align-self:flex-start;margin-left:82px;--pad:0px;--caret:#77797c;--cm:0px;--cl:0px}
.btn{flex:none;display:grid;place-content:center;height:52px;color:#c6c6c6}
.lr{padding-top:7px;font-size:16px;line-height:19px;color:#d9dadc;flex:none}
.lr b{color:#4a7da3;display:inline-block;width:18px;font-weight:400}
.sp{flex:1}
.mt{width:112px;padding-top:10px;flex:none}
.mt div{width:84px;height:5px;background:#2d3035;margin-bottom:1px}
.mt .h{display:flex;align-items:center;width:auto;background:none;margin-top:9px;height:11px;color:#4fb9df;gap:1px}
.mt .h i{width:84px;height:11px;flex:none;background:repeating-linear-gradient(90deg,transparent 0 2px,#151516 2px 3px),linear-gradient(90deg,#4c90b5 60px,#9cd6ee 60px 63px,#2d3035 63px)}
.end{display:flex;background:linear-gradient(#5a5f66,#666b72);padding-left:28px;clip-path:polygon(16px 0,100% 0,100% 100%,0 100%);flex:none;font-size:15px;color:#dadcdf;height:58px;margin-bottom:-6px;position:relative}
.end button{width:70px;border-left:1px solid #44484e}.end button:last-child{width:82px}
.bot{height:8px;background:linear-gradient(#6a6d72 1px,#484b51 2px,#33363b);border-bottom:1px solid #000}
.os{height:1px;background:linear-gradient(90deg,#8b8b8b 489px,#fff 489px 561px,#8b8b8b 561px)}
</style>
<div class="row"><div class="edge"></div>
<div class="cell" style="width:60px;margin-left:46px"><div class="t" style="color:#5d6065">${ic('midi')}</div>MIDI</div>
<div class="cell" style="width:83px;padding-top:10px"><div class="meters"><i></i><i></i></div>Performance</div>
<svg style="margin:9px 0 0 18px" width="32" height="34" viewBox="0 0 32 34"><ellipse cx="16" cy="17" rx="13.500" ry="13.500" fill="none" stroke="#a9abad" stroke-width="4" stroke-linecap="round" stroke-dasharray="0.100 6.960"/></svg>
<div class="cell" style="margin-left:15px;width:102px;align-items:flex-start"><div class="t">8:18 days</div>Record Max</div>
<div class="cell time" style="width:167px"><div class="tm">00052.01.01.42</div><drop-down label="Time format" value="Bars"></drop-down></div>
<button class="btn" style="margin-left:15px;width:34px" aria-label="Previous">${ic('prev')}</button><button class="btn" style="width:32px" aria-label="Rewind">${ic('rew')}</button><button class="btn" style="width:46px" aria-label="Forward">${ic('ffw')}</button><button class="btn" style="width:10px" aria-label="Next">${ic('next')}</button><button class="btn" style="margin-left:9px;width:35px" aria-label="Return to zero">${ic('start')}</button>
<button class="btn" style="width:58px;color:#2fb0da" aria-label="Stop">${ic('stop')}</button><button class="btn" style="width:34px" aria-label="Play">${ic('play')}</button><button class="btn" style="width:50px" aria-label="Record">${ic('record')}</button><button class="btn" style="width:54px;color:#929496" aria-label="Loop">${ic('loop',36)}</button>
<div class="lr" style="margin-left:16px;width:152px"><div><b>L</b>00043.01.01.49</div><div><b>R</b>00048.04.03.59</div></div>
<div class="cell" style="width:54px"><div class="t">Off</div>Sync</div>
<div class="cell" style="width:34px;color:#8e9092;padding-top:2px"><ui-icon name="ramp" size="30"></ui-icon><ui-icon name="gear" size="26" style="margin-top:-8px"></ui-icon></div>
<div class="cell" style="width:34px;color:#8e9092;padding-top:2px"><ui-icon name="punchin" size="30"></ui-icon><ui-icon name="punchout" size="30" style="margin-top:-10px"></ui-icon></div>
<div class="cell" style="width:84px"><div class="t" style="color:#85888a;width:80px;justify-content:space-between">${ic('rec',30)}${ic('wrench',22)}${ic('metro',30)}</div>Metronome</div>
<div class="cell" style="width:70px"><div class="t">4 / 4</div>Timing</div>
<div class="cell" style="width:42px"><div class="t">-</div>Key</div>
<div class="cell" style="width:76px"><div class="t">79.00</div>Tempo</div>
<div class="mt" style="margin-left:8px"><div></div><div></div><div class="h"><i></i>${ic('stereo',36)}</div></div>
<div class="sp"></div><div class="end"><button>Edit</button><button>Mix</button><button>Browse</button></div></div>
<div class="bot"></div><div class="os"></div>`);

make('studio-app', () => `<style>
:host{display:flex;flex-direction:column;height:100vh}
title-bar,menu-bar,tool-bar,transport-bar{flex:none}
</style><title-bar></title-bar><menu-bar></menu-bar><tool-bar></tool-bar><arrange-view></arrange-view><transport-bar></transport-bar>`);
</script>
</body>
</html>
